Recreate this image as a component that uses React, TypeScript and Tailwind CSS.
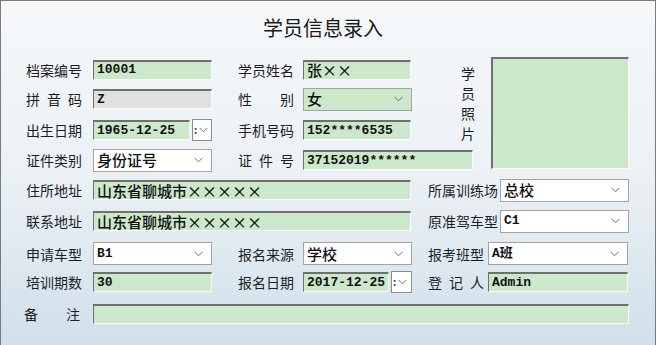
import type { ReactNode } from "react";

const green = "bg-[#cbe8cb]";

function Label({ text, w = 56, box = 67 }: { text: string; w?: number; box?: number }) {
  const chars = text.split("");
  return (
    <div className="shrink-0" style={{ width: box }}>
      <div className="flex justify-between text-[14px] leading-[20px] text-[#1e1e1e]" style={{ width: w }}>
        {chars.map((c, i) => (
          <span key={i}>{c}</span>
        ))}
      </div>
    </div>
  );
}

function Chevron() {
  return (
    <svg width="9" height="6" viewBox="0 0 9 6" className="shrink-0">
      <polyline points="0.5,0.8 4.5,4.8 8.5,0.8" fill="none" stroke="#6f6f6f" strokeWidth="1" />
    </svg>
  );
}

function Value({ children, cjk }: { children: ReactNode; cjk?: boolean }) {
  return (
    <span
      className={
        cjk
          ? "text-[15px] font-medium leading-[18px] text-[#111] font-['Noto_Sans_CJK_SC',sans-serif] whitespace-nowrap"
          : "text-[13px] font-bold leading-[18px] text-[#111] font-['Liberation_Mono','Noto_Sans_CJK_SC',monospace] whitespace-nowrap"
      }
    >
      {children}
    </span>
  );
}

function TextBox({ w, gray, children }: { w: number; gray?: boolean; children?: ReactNode }) {
  return (
    <div
      className={`h-[20px] shrink-0 flex items-center pl-[3px] overflow-hidden border-t-2 border-l border-t-[#6f6f6f] border-l-[#6f6f6f] border-b border-r border-b-white border-r-white ${
        gray ? "bg-[#e0e0e0]" : green
      }`}
      style={{ width: w }}
    >
      {children}
    </div>
  );
}

function Select({ w, isGreen, children }: { w: number; isGreen?: boolean; children?: ReactNode }) {
  return (
    <div
      className={`h-[23px] shrink-0 flex items-center justify-between pl-[3px] pr-[8px] border border-[#a3a3a3] ${
        isGreen ? green : "bg-white"
      }`}
      style={{ width: w }}
    >
      <div className="flex items-center">{children}</div>
      <Chevron />
    </div>
  );
}

function DateBox({ w, value }: { w: number; value: string }) {
  return (
    <div className="flex items-center shrink-0">
      <TextBox w={w}>
        <Value>{value}</Value>
      </TextBox>
      <div className="ml-[2px] h-[22px] w-[21px] bg-white border border-[#8c8c8c] flex items-center pl-[1px] gap-[2px]">
        <span className="text-[10px] leading-none font-bold text-[#333]">:</span>
        <Chevron />
      </div>
    </div>
  );
}

export default function App() {
  return (
    <div className="w-[656px] h-[345px] overflow-hidden border-l border-t border-r border-[#7b7b7b] bg-linear-to-b from-[#f6f8fa] via-[#ebf1f5] to-[#d1e0eb] font-['Noto_Sans_CJK_SC',sans-serif]">
      <div className="h-[54px] flex items-center justify-center pr-[10px]">
        <h1 className="text-[20px] leading-none text-[#1a1a1a]">学员信息录入</h1>
      </div>

      <div className="pl-[25px] grid grid-cols-[67px_119px_26px_65px_157px_16px_15px_138px] grid-rows-[29px_30px_32px_28px] items-center">
        <div className="col-start-1 row-start-1"><Label text="档案编号" /></div>
        <div className="col-start-2 row-start-1"><TextBox w={119}><Value>10001</Value></TextBox></div>
        <div className="col-start-4 row-start-1"><Label text="学员姓名" box={65} /></div>
        <div className="col-start-5 row-start-1"><TextBox w={108}><Value cjk>张××</Value></TextBox></div>

        <div className="col-start-1 row-start-2"><Label text="拼音码" /></div>
        <div className="col-start-2 row-start-2"><TextBox w={119} gray><Value>Z</Value></TextBox></div>
        <div className="col-start-4 row-start-2"><Label text="性别" box={65} /></div>
        <div className="col-start-5 row-start-2"><Select w={109} isGreen><Value cjk>女</Value></Select></div>

        <div className="col-start-1 row-start-3"><Label text="出生日期" /></div>
        <div className="col-start-2 row-start-3"><DateBox w={97} value="1965-12-25" /></div>
        <div className="col-start-4 row-start-3"><Label text="手机号码" box={65} /></div>
        <div className="col-start-5 row-start-3"><TextBox w={108}><Value>152****6535</Value></TextBox></div>

        <div className="col-start-1 row-start-4"><Label text="证件类别" /></div>
        <div className="col-start-2 row-start-4"><Select w={119}><Value cjk>身份证号</Value></Select></div>
        <div className="col-start-4 row-start-4"><Label text="证件号" box={65} /></div>
        <div className="col-start-5 col-span-2 row-start-4"><TextBox w={170}><Value>37152019******</Value></TextBox></div>

        <div className="col-start-6 row-start-1 row-span-4 self-start mt-[8px] flex flex-col items-center text-[14px] leading-[20px] text-[#1e1e1e]">
          <span>学</span>
          <span>员</span>
          <span>照</span>
          <span>片</span>
        </div>
        <div className={`col-start-8 row-start-1 row-span-4 self-start mt-[2px] h-[112px] w-[138px] border-t-2 border-l-2 border-[#707070] border-b border-r border-b-white border-r-white ${green}`} />
      </div>

      <div className="pl-[25px] flex flex-col">
        <div className="h-[32px] flex items-center">
          <Label text="住所地址" />
          <TextBox w={318}><Value cjk>山东省聊城市×××××</Value></TextBox>
          <div className="ml-[17px]"><Label text="所属训练场" w={70} box={72} /></div>
          <Select w={129}><Value cjk>总校</Value></Select>
        </div>
        <div className="h-[30px] flex items-center">
          <Label text="联系地址" />
          <TextBox w={318}><Value cjk>山东省聊城市×××××</Value></TextBox>
          <div className="ml-[17px]"><Label text="原准驾车型" w={70} box={72} /></div>
          <Select w={129}><Value>C1</Value></Select>
        </div>
        <div className="h-[35px] flex items-center">
          <Label text="申请车型" />
          <Select w={119}><Value>B1</Value></Select>
          <div className="ml-[26px]"><Label text="报名来源" box={65} /></div>
          <Select w={109}><Value cjk>学校</Value></Select>
          <div className="ml-[16px]"><Label text="报考班型" box={60} /></div>
          <Select w={140}><Value>A班</Value></Select>
        </div>
        <div className="h-[22px] flex items-center">
          <Label text="培训期数" />
          <TextBox w={119}><Value>30</Value></TextBox>
          <div className="ml-[26px]"><Label text="报名日期" box={65} /></div>
          <DateBox w={86} value="2017-12-25" />
          <div className="ml-[16px]"><Label text="登记人" box={60} /></div>
          <TextBox w={140}><Value>Admin</Value></TextBox>
        </div>
        <div className="mt-[11px] h-[20px] flex items-center">
          <div className="-ml-[2px] mr-[2px]"><Label text="备注" /></div>
          <TextBox w={536} />
        </div>
      </div>
    </div>
  );
}
